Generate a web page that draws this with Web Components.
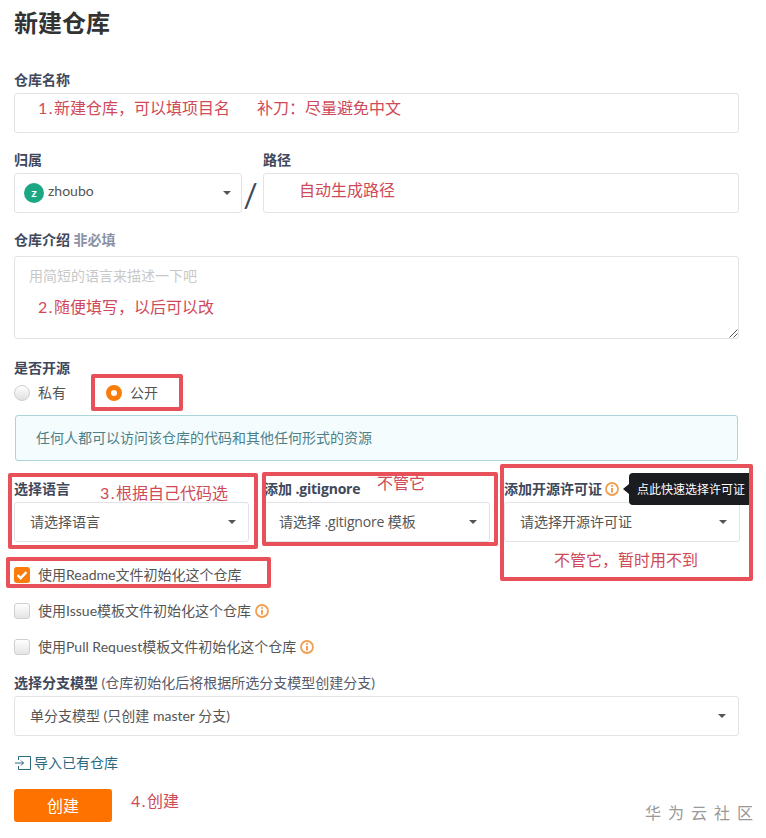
<!DOCTYPE html>
<html lang="zh">
<head>
<meta charset="utf-8">
<title>新建仓库</title>
<style>
  html, body { margin: 0; background: #fff; }
  body {
    position: relative;
    width: 766px;
    height: 838px;
    overflow: hidden;
    font: 14px/20px Lato, "Noto Sans CJK SC", sans-serif;
    color: #40485b;
  }
  .num { letter-spacing: 1.5px; }
</style>
</head>
<body>
<repo-form>
  <page-title>新建仓库</page-title>

  <form-field style="margin-top:29px">
    <span slot="label">仓库名称</span>
    <text-box><note-text style="margin:4px 0 0 23px"><span class="num">1.</span>新建仓库，可以填项目名<span style="margin-left:27px">补刀：尽量避免中文</span></note-text></text-box>
  </form-field>

  <path-row style="margin-top:17px">
    <form-field slot="owner">
      <span slot="label">归属</span>
      <select-box arrow="14"><user-avatar>z</user-avatar><span style="margin:-4px 0 0 4px">zhoubo</span></select-box>
    </form-field>
    <form-field slot="path">
      <span slot="label">路径</span>
      <text-box><note-text style="margin:6px 0 0 35px">自动生成路径</note-text></text-box>
    </form-field>
  </path-row>

  <form-field style="margin-top:17px" gap="6">
    <span slot="label">仓库介绍 <span style="color:#8b92a5">非必填</span></span>
    <text-box height="83" resize>
      <div style="margin:9px 0 0 14px;color:#c8c8c8">用简短的语言来描述一下吧</div>
      <note-text style="margin:11px 0 0 23px"><span class="num">2.</span>随便填写，以后可以改</note-text>
    </text-box>
  </form-field>

  <form-field style="margin-top:19px" gap="5">
    <span slot="label">是否开源</span>
    <radio-group>
      <radio-option>私有</radio-option>
      <radio-option checked>公开</radio-option>
    </radio-group>
  </form-field>

  <info-alert>任何人都可以访问该仓库的代码和其他任何形式的资源</info-alert>

  <three-cols>
    <form-field>
      <span slot="label">选择语言</span>
      <select-box arrow="16"><span style="margin-left:6px">请选择语言</span></select-box>
    </form-field>
    <form-field>
      <span slot="label">添加 <span style="font-family:'Open Sans','Noto Sans CJK SC',sans-serif;letter-spacing:-.2px">.gitignore</span></span>
      <select-box arrow="16"><span style="margin-left:5px">请选择 <span style="font-family:'Open Sans',sans-serif;letter-spacing:-.2px">.gitignore</span> 模板</span></select-box>
    </form-field>
    <form-field>
      <span slot="label">添加开源许可证 <info-icon></info-icon></span>
      <select-box arrow="16"><span style="margin-left:6px">请选择开源许可证</span></select-box>
    </form-field>
  </three-cols>

  <check-row checked style="margin-top:23px">使用Readme文件初始化这个仓库</check-row>
  <check-row style="margin-top:16px">使用Issue模板文件初始化这个仓库 <info-icon></info-icon></check-row>
  <check-row style="margin-top:16px">使用Pull Request模板文件初始化这个仓库 <info-icon></info-icon></check-row>

  <form-field style="margin-top:16px">
    <span slot="label">选择分支模型 <span style="font-weight:400;color:#555b6b">(仓库初始化后将根据所选分支模型创建分支)</span></span>
    <select-box arrow="16"><span style="margin-left:6px">单分支模型 (只创建 master 分支)</span></select-box>
  </form-field>

  <import-link>导入已有仓库</import-link>
  <primary-button>创建</primary-button>
</repo-form>

<!-- hand drawn annotations lying over the page -->
<hint-tip>点此快速选择许可证</hint-tip>
<red-box x="91" y="374" w="92" h="37"></red-box>
<red-box x="8" y="473" w="250" h="76"></red-box>
<red-box x="262" y="472" w="236" h="74"></red-box>
<red-box x="500" y="464" w="253" h="117"></red-box>
<red-box x="6" y="557" w="265" h="31"></red-box>
<float-note x="100" y="483"><span class="num">3.</span>根据自己代码选</float-note>
<float-note x="377" y="473">不管它</float-note>
<float-note x="554" y="550">不管它，暂时用不到</float-note>
<float-note x="131" y="791"><span class="num">4.</span>创建</float-note>
<water-mark>华为云社区</water-mark>

<script>
// small helper, every element just renders its html into an open shadow root
class Base extends HTMLElement {
  constructor() {
    super();
    this.attachShadow({ mode: 'open' });
  }
  connectedCallback() {
    this.shadowRoot.innerHTML = this.render();
  }
}

class RepoForm extends Base {
  render() {
    return `<style>:host{display:block;width:725px;padding:5px 0 0 14px}</style><slot></slot>`;
  }
}

class PageTitle extends Base {
  render() {
    return `<style>:host{display:block;font-size:24px;line-height:36px;font-weight:700;color:#333}</style><slot></slot>`;
  }
}

class FormField extends Base {
  render() {
    const gap = this.getAttribute('gap') || 3;
    return `<style>
      :host{display:block;min-width:0}
      .label{font-weight:700;line-height:20px;margin-bottom:${gap}px;white-space:nowrap}
    </style><div class="label"><slot name="label"></slot></div><slot></slot>`;
  }
}

class TextBox extends Base {
  render() {
    const h = this.getAttribute('height') || 40;
    const grip = this.hasAttribute('resize') ? `<svg class="grip" width="10" height="10" viewBox="0 0 10 10"><path d="M9.500 1.500l-8 8M9.500 5.500l-4 4" stroke="#555" fill="none"/></svg>` : '';
    return `<style>
      :host{display:block;position:relative;box-sizing:border-box;height:${h}px;border:1px solid #e2e3e6;border-radius:3px;background:#fff}
      .grip{position:absolute;right:0;bottom:0}
    </style><slot></slot>${grip}`;
  }
}

class NoteText extends Base {
  render() {
    return `<style>:host{display:block;font-size:16px;line-height:20px;color:#cf4a58;white-space:nowrap;font-weight:400}</style><slot></slot>`;
  }
}

class PathRow extends Base {
  render() {
    return `<style>
      :host{display:flex}
      .owner{width:228px;flex:none}
      .slash{width:21px;flex:none;align-self:flex-end;height:40px;line-height:43px;text-align:center;font-size:32px;color:#40485b;margin-left:-2px;margin-right:2px}
      .path{flex:1;min-width:0}
    </style><div class="owner"><slot name="owner"></slot></div><div class="slash">/</div><div class="path"><slot name="path"></slot></div>`;
  }
}

class SelectBox extends Base {
  render() {
    const right = this.getAttribute('arrow') || 17;
    return `<style>
      :host{display:flex;align-items:center;box-sizing:border-box;height:40px;padding-left:9px;padding-right:${right - 4}px;border:1px solid #e2e3e6;border-radius:3px;background:#fff;color:#555;white-space:nowrap;font-weight:400}
      .items{flex:1;display:flex;align-items:center;min-width:0}
      svg{flex:none}
    </style><div class="items"><slot></slot></div><svg width="8" height="4" viewBox="0 0 8 4"><path d="M0 0h8L4 4z" fill="#555"/></svg>`;
  }
}

class UserAvatar extends Base {
  render() {
    return `<style>:host{display:block;flex:none;width:20px;height:20px;border-radius:50%;background:#1ba784;color:#fff;font-size:12px;font-weight:700;line-height:20px;text-align:center}</style><slot></slot>`;
  }
}

class RadioGroup extends Base {
  render() {
    return `<style>:host{display:flex;gap:40px}</style><slot></slot>`;
  }
}

class RadioOption extends Base {
  render() {
    const on = this.hasAttribute('checked');
    return `<style>
      :host{display:flex;align-items:center;gap:8px;color:#555;font-weight:400}
      i{display:block;box-sizing:border-box;width:16px;height:16px;border-radius:50%}
      .off{border:1px solid #cfcfcf;background:linear-gradient(#fff,#e0e0e0)}
      .on{border:5px solid #fa7c0a;background:#fff}
    </style><i class="${on ? 'on' : 'off'}"></i><span><slot></slot></span>`;
  }
}

class InfoAlert extends Base {
  render() {
    return `<style>
      :host{display:block;box-sizing:border-box;height:46px;width:723px;margin:12px 0 0 1px;padding:12px 20px;line-height:20px;background:#f4fcfd;border:1px solid #a9d5da;border-radius:3px;color:#4d7f8a}
    </style><slot></slot>`;
  }
}

class ThreeCols extends Base {
  render() {
    return `<style>:host{display:grid;grid-template-columns:235px 226px 235px;column-gap:15px;margin-top:18px}
      ::slotted(:nth-child(3)){margin-left:-1px}</style><slot></slot>`;
  }
}

class CheckRow extends Base {
  render() {
    const on = this.hasAttribute('checked');
    const tick = on ? `<svg width="16" height="16" viewBox="0 0 16 16"><path d="M3.600 8.200l3 3 5.800-6" fill="none" stroke="#fff" stroke-width="2.400"/></svg>` : '';
    return `<style>
      :host{display:flex;align-items:center;gap:8px;height:20px;color:#555}
      i{display:block;box-sizing:border-box;width:16px;height:16px;border-radius:3px;flex:none}
      .off{border:1px solid #d0d0d0;background:linear-gradient(#fff,#e4e4e4)}
      .on{background:#fa7c0a}
      svg{display:block}
      span{white-space:nowrap}
    </style><i class="${on ? 'on' : 'off'}">${tick}</i><span><slot></slot></span>`;
  }
}

class InfoIcon extends Base {
  render() {
    return `<style>:host{display:inline-block;width:14px;height:14px;vertical-align:-2px}svg{display:block}</style><svg width="14" height="14" viewBox="0 0 14 14"><circle cx="7" cy="7" r="6" fill="none" stroke="#f0a050" stroke-width="1.800"/><circle cx="7" cy="4" r="1.100" fill="#f0a050"/><path d="M7 6v4.600" stroke="#f0a050" stroke-width="2"/></svg>`;
  }
}

class ImportLink extends Base {
  render() {
    return `<style>
      :host{display:flex;align-items:center;gap:3px;height:20px;margin-top:17px;color:#2a6a80}
      svg{display:block;margin-left:1px}
    </style><svg width="16" height="15" viewBox="0 0 16 15" fill="none" stroke="#2a6a80"><path d="M3.500 4V.5h12v13h-12V10M0 7h8.500M6 4.500l2.500 2.500L6 9.500"/></svg><span><slot></slot></span>`;
  }
}

class PrimaryButton extends Base {
  render() {
    return `<style>
      :host{display:block;width:98px;height:33px;margin-top:16px;background:#fe7300;border-radius:3px;color:#fff;font-size:16px;line-height:34px;text-align:center}
    </style><slot></slot>`;
  }
}

class RedBox extends Base {
  render() {
    const a = n => this.getAttribute(n);
    return `<style>
      :host{position:absolute;left:${a('x')}px;top:${a('y')}px;width:${a('w')}px;height:${a('h')}px;box-sizing:border-box;border:4px solid #e8505a;border-radius:2px}
    </style>`;
  }
}

class FloatNote extends Base {
  render() {
    const a = n => this.getAttribute(n);
    return `<style>
      :host{position:absolute;left:${a('x')}px;top:${a('y')}px;font-size:16px;line-height:20px;color:#cf4a58;white-space:nowrap}
    </style><slot></slot>`;
  }
}

class HintTip extends Base {
  render() {
    return `<style>
      :host{position:absolute;left:629px;top:473px;width:121px;height:32px;box-sizing:border-box;padding-left:8px;background:#1b1c20;border-radius:4px 0 0 4px;color:#fff;font-size:12px;line-height:33px;white-space:nowrap}
      :host::before{content:"";position:absolute;left:-6px;top:11px;border:5px solid transparent;border-left:0;border-right:6px solid #1b1c20}
    </style><slot></slot>`;
  }
}

class WaterMark extends Base {
  render() {
    return `<style>
      :host{position:absolute;left:645px;top:803px;font-size:16px;line-height:20px;letter-spacing:7px;color:#999;white-space:nowrap}
    </style><slot></slot>`;
  }
}

const tags = {
  'repo-form': RepoForm, 'page-title': PageTitle, 'form-field': FormField, 'text-box': TextBox,
  'note-text': NoteText, 'path-row': PathRow, 'select-box': SelectBox, 'user-avatar': UserAvatar,
  'radio-group': RadioGroup, 'radio-option': RadioOption, 'info-alert': InfoAlert, 'three-cols': ThreeCols,
  'check-row': CheckRow, 'info-icon': InfoIcon, 'import-link': ImportLink, 'primary-button': PrimaryButton,
  'red-box': RedBox, 'float-note': FloatNote, 'hint-tip': HintTip, 'water-mark': WaterMark
};
Object.keys(tags).forEach(name => customElements.define(name, tags[name]));
</script>
</body>
</html>
